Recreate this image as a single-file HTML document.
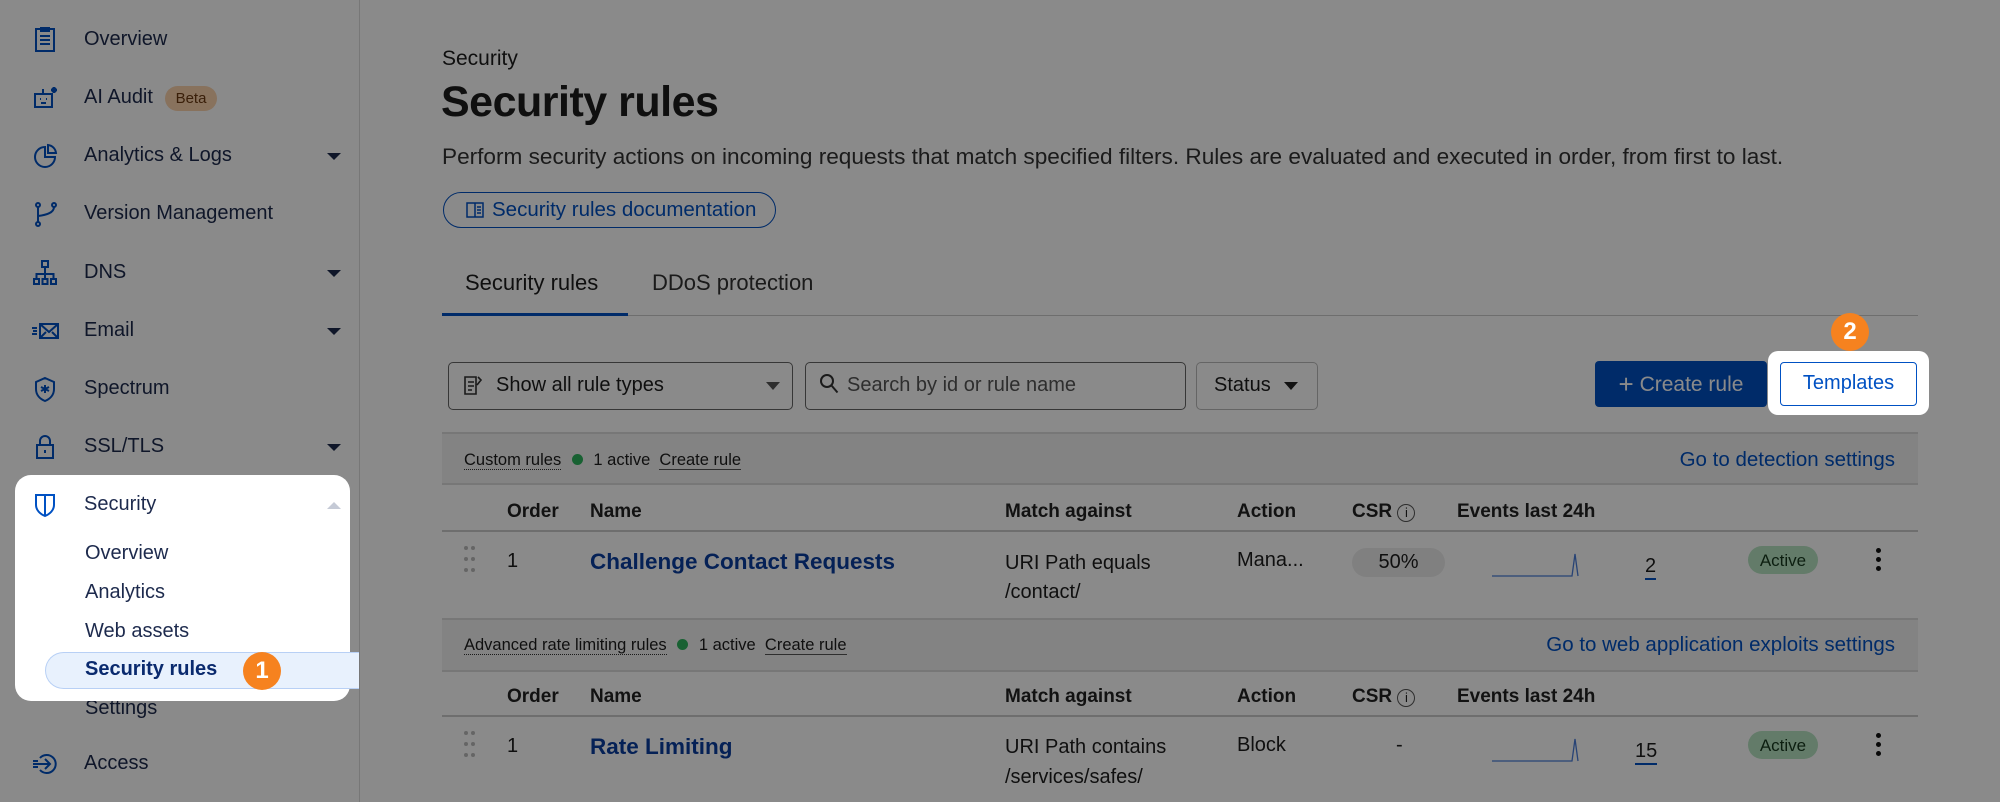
<!DOCTYPE html>
<html><head><meta charset="utf-8"><style>
*{margin:0;padding:0;box-sizing:border-box}
body{width:2000px;height:802px;overflow:hidden;background:#fff;font-family:"Liberation Sans",sans-serif;color:#1d1d1d;position:relative}
.a{position:absolute;white-space:nowrap}
.nav{font-size:20px;color:#1d2a4d}
.ic{position:absolute;left:31px;width:28px;height:28px}
.car{position:absolute;left:327px;width:0;height:0;border-left:7px solid transparent;border-right:7px solid transparent;border-top:7px solid #1d2a4d}
.ov{position:absolute;left:0;top:0;width:2000px;height:802px;background:rgba(0,0,0,0.46)}
.th{font-size:19px;font-weight:bold;color:#222}
.lk{color:#0051c3}
.hl{border-bottom:1px dotted #333}
.ul{border-bottom:1px solid #555}
.badge{position:absolute;width:38px;height:38px;border-radius:50%;background:#f6821f;color:#fff;font-weight:bold;font-size:24px;text-align:center;line-height:38px}
.dots{position:absolute;width:12px;height:26px}
.dots i{position:absolute;width:4px;height:4px;border-radius:50%;background:#bbb}
</style></head><body>
<!-- sidebar -->
<div class="a" style="left:359px;top:0;width:1px;height:802px;background:#ddd"></div>
<svg class="ic" style="top:26px" viewBox="0 0 28 28" fill="none" stroke="#0051c3" stroke-width="2"><rect x="5" y="3" width="18" height="22"/><path d="M10 3v-1h8v3h-8zM9 10h10M9 14h10M9 18h10"/></svg>
<div class="a nav" style="left:84px;top:28px">Overview</div>
<svg class="ic" style="top:84px" viewBox="0 0 28 28" fill="none" stroke="#0051c3" stroke-width="2"><rect x="4" y="10" width="17" height="13"/><path d="M12 10V5M9 15h1M15 15h1M10 19h5M23 3v6M20 6h6M21 4l4 4M25 4l-4 4"/></svg>
<div class="a nav" style="left:84px;top:86px">AI Audit</div>
<div class="a" style="left:165px;top:86px;width:52px;height:25px;border-radius:13px;background:#fbd2ad;color:#6b3a12;font-size:15px;text-align:center;line-height:25px">Beta</div>
<svg class="ic" style="top:142px" viewBox="0 0 28 28" fill="none" stroke="#0051c3" stroke-width="2"><path d="M14 5a10 10 0 1 0 10 10H14z"/><path d="M17 3a9 9 0 0 1 8 8h-8z"/></svg>
<div class="a nav" style="left:84px;top:144px">Analytics &amp; Logs</div><div class="car" style="top:153px"></div>
<svg class="ic" style="top:200px" viewBox="0 0 28 28" fill="none" stroke="#0051c3" stroke-width="2"><circle cx="7" cy="5" r="2"/><circle cx="7" cy="24" r="2"/><circle cx="23" cy="5" r="2"/><path d="M7 7v15M23 7c0 6-8 8-16 9"/></svg>
<div class="a nav" style="left:84px;top:202px">Version Management</div>
<svg class="ic" style="top:259px" viewBox="0 0 28 28" fill="none" stroke="#0051c3" stroke-width="2"><rect x="11" y="2" width="6" height="6"/><rect x="3" y="20" width="5" height="5"/><rect x="11.5" y="20" width="5" height="5"/><rect x="20" y="20" width="5" height="5"/><path d="M14 8v12M5.5 20v-5h17v5"/></svg>
<div class="a nav" style="left:84px;top:261px">DNS</div><div class="car" style="top:270px"></div>
<svg class="ic" style="top:317px" viewBox="0 0 28 28" fill="none" stroke="#0051c3" stroke-width="2"><rect x="9" y="7" width="18" height="14"/><path d="M9 7l9 8 9-8M9 21l6-6M27 21l-6-6M1 11h5M2 14h4M1 17h5"/></svg>
<div class="a nav" style="left:84px;top:319px">Email</div><div class="car" style="top:328px"></div>
<svg class="ic" style="top:375px" viewBox="0 0 28 28" fill="none" stroke="#0051c3" stroke-width="2"><path d="M14 3l9 4v7c0 6-4 10-9 12-5-2-9-6-9-12V7z"/><path d="M14 10v8M10 12l8 4M18 12l-8 4"/></svg>
<div class="a nav" style="left:84px;top:377px">Spectrum</div>
<svg class="ic" style="top:433px" viewBox="0 0 28 28" fill="none" stroke="#0051c3" stroke-width="2"><rect x="6" y="12" width="16" height="13"/><path d="M9 12V8a5 5 0 0 1 10 0v4M14 17v3"/></svg>
<div class="a nav" style="left:84px;top:435px">SSL/TLS</div><div class="car" style="top:444px"></div>
<div class="a nav" style="left:85px;top:697px">Settings</div>
<svg class="ic" style="top:750px" viewBox="0 0 28 28" fill="none" stroke="#0051c3" stroke-width="2"><path d="M9 8a9 9 0 1 1 0 12"/><path d="M2 14h17M14 9l5 5-5 5M2 11h5M2 17h5"/></svg>
<div class="a nav" style="left:84px;top:752px">Access</div>

<!-- main -->
<div class="a" style="left:442px;top:47px;font-size:21px">Security</div>
<div class="a" style="left:441px;top:78px;font-size:43px;font-weight:bold;letter-spacing:-0.5px">Security rules</div>
<div class="a" style="left:442px;top:144px;font-size:22.6px;color:#333">Perform security actions on incoming requests that match specified filters. Rules are evaluated and executed in order, from first to last.</div>
<div class="a" style="left:443px;top:192px;width:333px;height:36px;border:1.5px solid #0051c3;border-radius:18px"></div>
<svg class="a" style="left:466px;top:201px" width="18" height="18" viewBox="0 0 18 18" fill="none" stroke="#0051c3" stroke-width="1.5"><rect x="1" y="2" width="16" height="14"/><path d="M9 2v14M11 6h4M11 9h4M11 12h4"/></svg>
<div class="a lk" style="left:492px;top:198px;font-size:20.5px">Security rules documentation</div>
<div class="a" style="left:465px;top:270px;font-size:22px">Security rules</div>
<div class="a" style="left:652px;top:270px;font-size:22px;color:#333">DDoS protection</div>
<div class="a" style="left:442px;top:315px;width:1476px;height:1px;background:#ccc"></div>
<div class="a" style="left:442px;top:313px;width:186px;height:3px;background:#0051c3"></div>

<!-- toolbar -->
<div class="a" style="left:448px;top:362px;width:345px;height:48px;border:1.5px solid #666;border-radius:5px"></div>
<svg class="a" style="left:463px;top:374px" width="20" height="22" viewBox="0 0 20 22" fill="none" stroke="#333" stroke-width="1.6"><path d="M2 3h11v17H2zM5 8h6M5 12h6M5 16h4M15 3l3 3-4 5"/></svg>
<div class="a" style="left:496px;top:374px;font-size:20px">Show all rule types</div>
<div class="a" style="left:766px;top:382px;border-left:7px solid transparent;border-right:7px solid transparent;border-top:8px solid #555"></div>
<div class="a" style="left:805px;top:362px;width:381px;height:48px;border:1.5px solid #666;border-radius:5px"></div>
<svg class="a" style="left:819px;top:373px" width="22" height="22" viewBox="0 0 22 22" fill="none" stroke="#333" stroke-width="2"><circle cx="8" cy="8" r="6"/><path d="M12.5 12.5l6 7"/></svg>
<div class="a" style="left:847px;top:374px;font-size:20px;color:#555">Search by id or rule name</div>
<div class="a" style="left:1196px;top:362px;width:122px;height:48px;border:1.5px solid #bbb;border-radius:5px"></div>
<div class="a" style="left:1214px;top:374px;font-size:20px">Status</div>
<div class="a" style="left:1284px;top:382px;border-left:7px solid transparent;border-right:7px solid transparent;border-top:8px solid #222"></div>
<div class="a" style="left:1595px;top:361px;width:172px;height:46px;background:#0051c3;border-radius:4px;color:#fff;font-size:21px;text-align:center;line-height:46px"><span style="font-size:26px;vertical-align:-2px">+</span> Create rule</div>

<!-- section 1 -->
<div class="a" style="left:442px;top:432px;width:1476px;height:53px;background:#f2f2f2;border-top:2px solid #ddd;border-bottom:2px solid #ddd"></div>
<div class="a" style="left:464px;top:451px;font-size:16.5px"><span class="hl">Custom rules</span> <span style="display:inline-block;width:11px;height:11px;border-radius:50%;background:#2db35d;margin:0 6px"></span> 1 active &nbsp;<span class="ul">Create rule</span></div>
<div class="a lk" style="right:105px;top:448px;font-size:20.5px">Go to detection settings</div>
<div class="a th" style="left:507px;top:501px">Order</div><div class="a th" style="left:590px;top:501px">Name</div><div class="a th" style="left:1005px;top:501px">Match against</div><div class="a th" style="left:1237px;top:501px">Action</div><div class="a th" style="left:1352px;top:501px">CSR <span style="font-weight:normal;display:inline-block;width:18px;height:18px;border:1.3px solid #555;border-radius:50%;font-size:13px;text-align:center;line-height:16px">i</span></div><div class="a th" style="left:1457px;top:501px">Events last 24h</div>
<div class="a" style="left:442px;top:530px;width:1476px;height:1.5px;background:#ccc"></div>
<div class="dots" style="left:464px;top:546px"><i style="left:0;top:0"></i><i style="left:7px;top:0"></i><i style="left:0;top:11px"></i><i style="left:7px;top:11px"></i><i style="left:0;top:22px"></i><i style="left:7px;top:22px"></i></div>
<div class="a" style="left:507px;top:550px;font-size:20px">1</div>
<div class="a lk" style="left:590px;top:549px;font-size:22.5px;font-weight:bold;color:#0a3ea0">Challenge Contact Requests</div>
<div class="a" style="left:1005px;top:549px;font-size:20px;line-height:29px">URI Path equals<br>/contact/</div>
<div class="a" style="left:1237px;top:549px;font-size:20px">Mana...</div>
<div class="a" style="left:1352px;top:548px;width:93px;height:29px;border-radius:15px;background:#ececec;font-size:20px;text-align:center;line-height:29px">50%</div>
<svg class="a" style="left:1490px;top:550px" width="98" height="30"><path d="M2 26h80l3-22 3 22" fill="none" stroke="#4a7dd8" stroke-width="1.3"/></svg>
<div class="a" style="left:1645px;top:555px;font-size:20px;border-bottom:2px solid #0051c3">2</div>
<div class="a" style="left:1748px;top:546px;width:70px;height:28px;border-radius:14px;background:#b7e4c2;color:#17391f;font-size:17px;text-align:center;line-height:29px">Active</div>
<div class="a" style="left:1876px;top:548px;width:5px;height:5px;border-radius:50%;background:#111;box-shadow:0 9px 0 #111,0 18px 0 #111"></div>

<!-- section 2 -->
<div class="a" style="left:442px;top:618px;width:1476px;height:54px;background:#f2f2f2;border-top:2px solid #ddd;border-bottom:2px solid #ddd"></div>
<div class="a" style="left:464px;top:636px;font-size:16.5px"><span class="hl">Advanced rate limiting rules</span> <span style="display:inline-block;width:11px;height:11px;border-radius:50%;background:#2db35d;margin:0 6px"></span> 1 active &nbsp;<span class="ul">Create rule</span></div>
<div class="a lk" style="right:105px;top:633px;font-size:20.5px">Go to web application exploits settings</div>
<div class="a th" style="left:507px;top:686px">Order</div><div class="a th" style="left:590px;top:686px">Name</div><div class="a th" style="left:1005px;top:686px">Match against</div><div class="a th" style="left:1237px;top:686px">Action</div><div class="a th" style="left:1352px;top:686px">CSR <span style="font-weight:normal;display:inline-block;width:18px;height:18px;border:1.3px solid #555;border-radius:50%;font-size:13px;text-align:center;line-height:16px">i</span></div><div class="a th" style="left:1457px;top:686px">Events last 24h</div>
<div class="a" style="left:442px;top:715px;width:1476px;height:1.5px;background:#ccc"></div>
<div class="dots" style="left:464px;top:731px"><i style="left:0;top:0"></i><i style="left:7px;top:0"></i><i style="left:0;top:11px"></i><i style="left:7px;top:11px"></i><i style="left:0;top:22px"></i><i style="left:7px;top:22px"></i></div>
<div class="a" style="left:507px;top:735px;font-size:20px">1</div>
<div class="a lk" style="left:590px;top:734px;font-size:22.5px;font-weight:bold;color:#0a3ea0">Rate Limiting</div>
<div class="a" style="left:1005px;top:732px;font-size:20px;line-height:30px">URI Path contains<br>/services/safes/</div>
<div class="a" style="left:1237px;top:734px;font-size:20px">Block</div>
<div class="a" style="left:1396px;top:734px;font-size:20px">-</div>
<svg class="a" style="left:1490px;top:735px" width="98" height="30"><path d="M2 26h80l3-22 3 22" fill="none" stroke="#4a7dd8" stroke-width="1.3"/></svg>
<div class="a" style="left:1635px;top:740px;font-size:20px;border-bottom:2px solid #0051c3">15</div>
<div class="a" style="left:1748px;top:731px;width:70px;height:28px;border-radius:14px;background:#b7e4c2;color:#17391f;font-size:17px;text-align:center;line-height:29px">Active</div>
<div class="a" style="left:1876px;top:733px;width:5px;height:5px;border-radius:50%;background:#111;box-shadow:0 9px 0 #111,0 18px 0 #111"></div>

<div class="ov"></div>

<!-- highlighted security group -->
<div class="a" style="left:15px;top:475px;width:335px;height:226px;background:#fff;border-radius:16px"></div>
<div class="a" style="left:45px;top:652px;width:314px;height:37px;background:#e8f1fd;border:1.5px solid #b8d0f5;border-right:none;border-radius:19px 0 0 19px"></div>
<svg class="ic" style="top:491px" viewBox="0 0 28 28" fill="none" stroke="#0051c3" stroke-width="2"><path d="M5 4h18v10c0 5-4 9-9 11-5-2-9-6-9-11z"/><path d="M14 4v20"/></svg>
<div class="a nav" style="left:84px;top:493px">Security</div>
<div class="a" style="left:327px;top:502px;border-left:7px solid transparent;border-right:7px solid transparent;border-bottom:7px solid #c5cad6"></div>
<div class="a nav" style="left:85px;top:542px">Overview</div>
<div class="a nav" style="left:85px;top:581px">Analytics</div>
<div class="a nav" style="left:85px;top:620px">Web assets</div>
<div class="a nav" style="left:85px;top:658px;font-weight:bold;color:#0a2a6e">Security rules</div>
<div class="badge" style="left:243px;top:652px">1</div>

<!-- templates highlight -->
<div class="a" style="left:1768px;top:351px;width:161px;height:64px;background:#fff;border-radius:10px"></div>
<div class="a" style="left:1780px;top:362px;width:137px;height:44px;border:1.5px solid #0051c3;border-radius:4px;color:#0051c3;font-size:20px;text-align:center;line-height:41px">Templates</div>
<div class="badge" style="left:1831px;top:313px">2</div>
</body></html>
